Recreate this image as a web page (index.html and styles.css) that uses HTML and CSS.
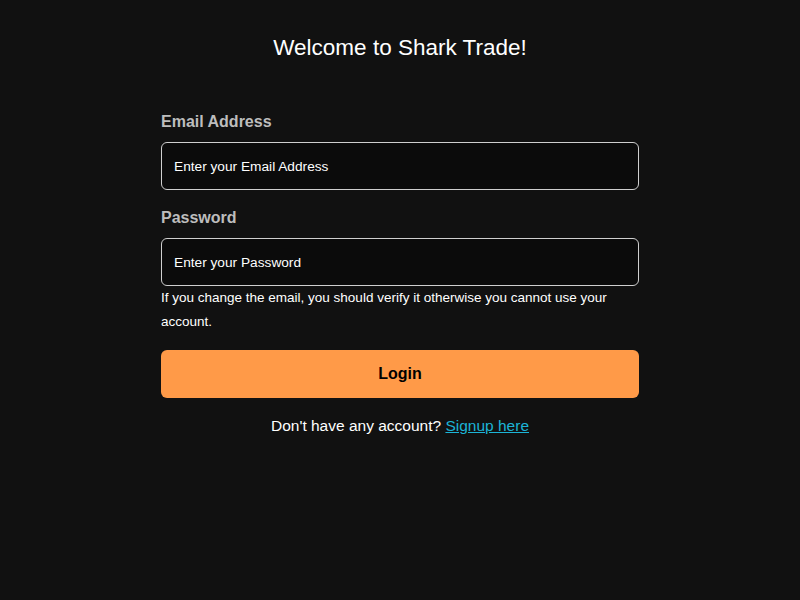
FILE: index.html
```html
<!DOCTYPE html>
<html>
  <head>
    <title>Shark Trade - Login</title>
    <link rel="stylesheet" href="styles.css">
  </head>
  <body>
    <div class="login">
      <h1>Welcome to Shark Trade!</h1>
      <form class="login-form">
        <label class="field-label" for="email">Email Address</label>
        <input class="field-input" id="email" type="email" placeholder="Enter your Email Address">
        <label class="field-label field-label-second" for="password">Password</label>
        <input class="field-input" id="password" type="password" placeholder="Enter your Password">
        <p class="hint">If you change the email, you should verify it otherwise you cannot use your account.</p>
        <button class="login-button" type="button">Login</button>
      </form>
      <p class="signup">Don't have any account? <a href="#">Signup here</a></p>
    </div>
  </body>
</html>
```

FILE: styles.css
```css
body {
  margin: 0;
  background-color: #111111;
  color: #fff;
  font-family: "Liberation Sans", Arial, sans-serif;
}

.login {
  width: 478px;
  margin: 0 auto;
  padding-top: 34px;
}

h1 {
  margin: 0 0 49px;
  font-size: 22.5px;
  line-height: 28px;
  font-weight: normal;
  text-align: center;
}

.login-form {
  display: flex;
  flex-direction: column;
}

.field-label {
  font-size: 16px;
  line-height: 20px;
  font-weight: bold;
  color: #bdbdbd;
  margin-top: 1px;
  margin-bottom: 10px;
}

.field-label-second {
  margin-top: 18px;
}

.field-input {
  box-sizing: border-box;
  height: 48px;
  padding: 0 12px;
  background-color: #0b0b0b;
  border: 1px solid #cfcfcf;
  border-radius: 6px;
  color: #fff;
  font-family: "Liberation Sans", Arial, sans-serif;
  font-size: 13.7px;
  outline: none;
}

.field-input::placeholder {
  color: #fff;
  opacity: 1;
}

.hint {
  margin: 0;
  font-size: 13.5px;
  line-height: 24px;
}

.login-button {
  margin-top: 16px;
  height: 48px;
  border: none;
  border-radius: 6px;
  background-color: #ff9a48;
  color: #000;
  font-family: "Liberation Sans", Arial, sans-serif;
  font-size: 16px;
  font-weight: bold;
  cursor: pointer;
}

.signup {
  margin: 18px 0 0;
  font-size: 15.5px;
  line-height: 20px;
  text-align: center;
}

.signup a {
  color: #1cb4d6;
}
```
